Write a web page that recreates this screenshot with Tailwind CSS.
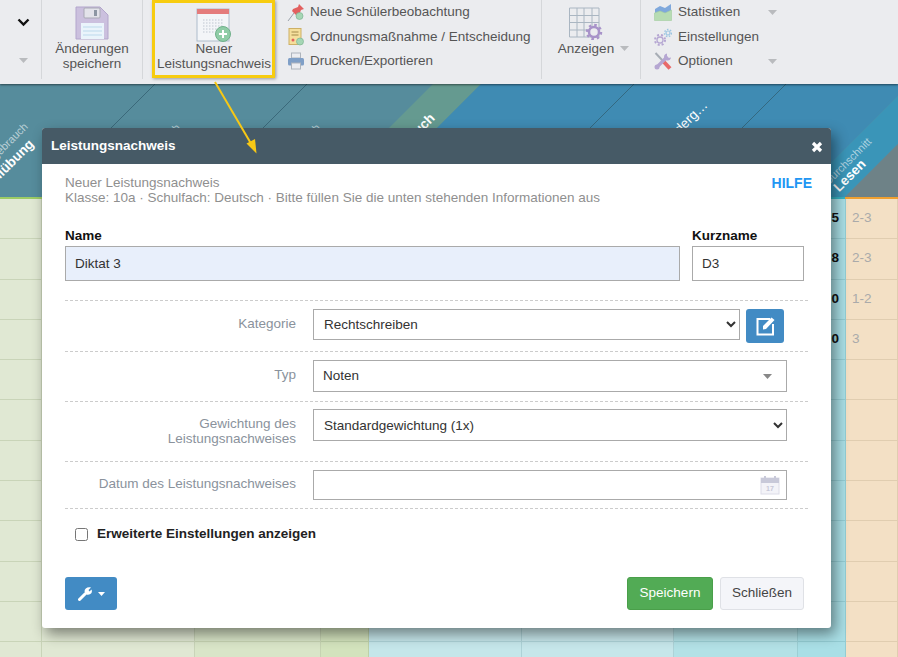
<!DOCTYPE html>
<html lang="de">
<head>
  <meta charset="utf-8" />
  <title>Leistungsnachweis</title>
  <script src="https://cdn.jsdelivr.net/npm/@tailwindcss/browser@4"></script>
</head>
<body class="relative w-[898px] h-[657px] overflow-hidden bg-white font-['Liberation_Sans',Arial,sans-serif] text-[13.5px]">

  <!-- toolbar -->
  <div class="relative z-20 flex h-[84px] bg-[#ebecef] text-[#555] shadow-[0_1px_2px_rgba(0,0,0,0.5)]">
    <div class="flex flex-col items-center w-[42px] h-[79px] pl-[6px] border-r border-[#d5d7da]">
      <svg class="mt-[18px]" width="13" height="9" viewBox="0 0 13 9"><path d="M1.5 1.5 6.5 6.5 11.5 1.5" fill="none" stroke="#111" stroke-width="2.4"/></svg>
      <svg class="mt-[31px]" width="9" height="5" viewBox="0 0 9 5"><path d="M0 0h9L4.500 5z" fill="#b9bbbe"/></svg>
    </div>
    <div class="flex flex-col items-center w-[101px] h-[79px] pt-[6px] border-r border-[#d5d7da] leading-[15px] text-center">
      <svg class="shrink-0" width="34" height="34" viewBox="0 0 34 34">
        <path d="M1 1h24l8 8v24H1z" fill="#cbc0de" stroke="#b3a6cc"/>
        <rect x="9" y="2" width="16" height="10" rx="1" fill="#e3e3ea" stroke="#a9a9b5"/>
        <rect x="19" y="4" width="3" height="6" fill="#8d96a3"/>
        <rect x="6" y="17" width="23" height="16" fill="#eaf4fb"/>
        <path d="M8 21h19M8 25h19M8 29h19" stroke="#bcd9ec"/>
      </svg>
      <span class="mt-[1px]">Änderungen<br>speichern</span>
    </div>
    <div class="flex flex-col items-center ml-[9px] w-[123px] h-[78px] pt-[5px] pl-[1px] border-[3px] border-[#f7cc0f] leading-[15px] text-center shadow-[1px_1px_3px_rgba(0,0,0,0.35)]">
      <svg class="shrink-0" width="36" height="34" viewBox="0 0 36 34">
        <rect x="1" y="1" width="32" height="32" fill="#f3f5f8" stroke="#aebccb"/>
        <rect x="1" y="1" width="32" height="5" fill="#e47c7c"/>
        <path d="M7 12h20M7 15h20M7 18h20M7 21h14M7 24h11" stroke="#bfc6d0" stroke-dasharray="1.500 1.500"/>
        <circle cx="27" cy="26" r="7.500" fill="#8fcca6" stroke="#6fb08a"/>
        <path d="M27 22v8M23 26h8" stroke="#fff" stroke-width="2"/>
      </svg>
      <span class="-mt-[1px] whitespace-nowrap">Neuer<br>Leistungsnachweis</span>
    </div>
    <div class="flex flex-col w-[267px] h-[79px] pl-[12px] pt-[3px] border-r border-[#d5d7da]">
      <div class="flex items-center h-[18px] gap-[5px]">
        <svg class="shrink-0" width="18" height="18" viewBox="0 0 18 18"><path d="M1 18 7 10" stroke="#9aa2ab"/><path d="M6 6 11 4 12 1 17 6 14 7 12 12 10 13 5 8z" fill="#e2605f"/><circle cx="12.500" cy="13" r="3.500" fill="#a5d6b5" stroke="#7db592" stroke-width=".7"/></svg>
        <span class="whitespace-nowrap">Neue Schülerbeobachtung</span>
      </div>
      <div class="flex items-center h-[18px] mt-[7px] gap-[5px]">
        <svg class="shrink-0" width="18" height="18" viewBox="0 0 18 18"><rect x="2" y="0.500" width="12" height="16" fill="#f5df9c" stroke="#cdb066"/><path d="M4.500 4h7M4.500 7h7" stroke="#a38a4a"/><circle cx="6" cy="12" r="1.500" fill="#e2605f"/><circle cx="13" cy="13.500" r="3.500" fill="#a5d6b5" stroke="#7db592" stroke-width=".7"/></svg>
        <span class="whitespace-nowrap">Ordnungsmaßnahme / Entscheidung</span>
      </div>
      <div class="flex items-center h-[18px] mt-[6px] gap-[5px]">
        <svg class="shrink-0" width="18" height="18" viewBox="0 0 18 18"><rect x="4.500" y="1" width="9" height="5" fill="#ecedf1" stroke="#aeb4bd"/><rect x="1" y="6" width="16" height="7.500" rx="1.500" fill="#7f9fc7"/><rect x="4.500" y="11" width="9" height="6" fill="#ecedf1" stroke="#aeb4bd"/></svg>
        <span class="whitespace-nowrap">Drucken/Exportieren</span>
      </div>
    </div>
    <div class="flex flex-col items-center w-[99px] h-[79px] pt-[7px] border-r border-[#d5d7da]">
      <svg class="shrink-0 -ml-[10px]" width="36" height="33" viewBox="0 0 36 33">
        <path d="M1.500 1h29.500v29H1.500zM9 1v29M16 1v29M24 1v29M1.500 8.500h29.500M1.500 15.500h29.500M1.500 23h29.500" fill="none" stroke="#aab6c2"/>
        <g transform="translate(26 25)"><circle r="5" fill="#ebecef" stroke="#a893c9" stroke-width="2.500"/><circle r="7" fill="none" stroke="#a893c9" stroke-width="2.500" stroke-dasharray="2.500 3"/></g>
      </svg>
      <span class="flex items-center gap-[6px] ml-[5px] mt-[1px] leading-[15px]">Anzeigen<svg width="9" height="5" viewBox="0 0 9 5"><path d="M0 0h9L4.500 5z" fill="#b9bbbe"/></svg></span>
    </div>
    <div class="flex flex-col pl-[13px] pt-[3px]">
      <div class="flex items-center h-[18px] gap-[6px]">
        <svg class="shrink-0" width="18" height="18" viewBox="0 0 18 18"><path d="M1 6 6 3 11 5 17 1V11H1z" fill="#7fa8dc"/><path d="M.500 10 6 8 11 10 17.500 7V17.500H.500z" fill="#b7dcb3" stroke="#a3cda0" stroke-width=".6"/></svg>
        <span class="w-[84px]">Statistiken</span>
        <svg width="9" height="5" viewBox="0 0 9 5"><path d="M0 0h9L4.500 5z" fill="#b9bbbe"/></svg>
      </div>
      <div class="flex items-center h-[18px] mt-[7px] gap-[6px]">
        <svg class="shrink-0" width="18" height="18" viewBox="0 0 18 18"><g transform="translate(6 12)"><circle r="3" fill="none" stroke="#b5a6d2" stroke-width="1.300"/><circle r="5" fill="none" stroke="#b5a6d2" stroke-width="2" stroke-dasharray="2 2"/></g><g transform="translate(14 5)"><circle r="2" fill="none" stroke="#9cc6e2" stroke-width="1.200"/><circle r="3.500" fill="none" stroke="#9cc6e2" stroke-width="1.500" stroke-dasharray="1.500 1.500"/></g></svg>
        <span>Einstellungen</span>
      </div>
      <div class="flex items-center h-[18px] mt-[6px] gap-[6px]">
        <svg class="shrink-0" width="18" height="18" viewBox="0 0 18 18"><path d="M1.500 1 9 9" stroke="#a7adb5" stroke-width="2"/><path d="M9 9 16 16.500" stroke="#e86a6a" stroke-width="4"/><path d="M13.500 4.500 3 15" stroke="#b5a6d2" stroke-width="3.200"/><circle cx="3" cy="15" r="2.500" fill="#b5a6d2"/><path d="M13 1.500A3.500 3.500 0 1 0 17 5.500L14.500 6 13 4.500z" fill="#b5a6d2"/></svg>
        <span class="w-[84px]">Optionen</span>
        <svg width="9" height="5" viewBox="0 0 9 5"><path d="M0 0h9L4.500 5z" fill="#b9bbbe"/></svg>
      </div>
    </div>
  </div>

  <!-- rotated column heads -->
  <div class="relative h-[113px] overflow-hidden">
    <svg class="absolute inset-0" width="898" height="113" viewBox="0 84 898 113">
      <rect x="0" y="84" width="898" height="113" fill="#568c9c"/>
      <path d="M320 197 433 84H481L368 197z" fill="#659a90"/>
      <path d="M368 197 481 84H898V96L797 197z" fill="#3f8bb3"/>
      <path d="M797 197 898 96V144L845 197z" fill="#3a95b8"/>
      <path d="M845 197 898 144V197z" fill="#6e8287"/>
      <path d="M42 197 155 84M194 197 307 84M521 197 634 84M673 197 786 84" stroke="#2f5a6b" stroke-width=".7"/>
    </svg>
    <span class="absolute right-[866px] bottom-[67px] -rotate-45 origin-bottom-right whitespace-nowrap text-[11px] text-white/60">Sprachgebrauch</span>
    <span class="absolute right-[859px] bottom-[48px] -rotate-45 origin-bottom-right whitespace-nowrap font-bold text-white">Stillübung</span>
    <span class="absolute right-[714px] bottom-[66px] -rotate-45 origin-bottom-right whitespace-nowrap text-[11px] text-white/60">Gebrauch</span>
    <span class="absolute right-[574px] bottom-[66px] -rotate-45 origin-bottom-right whitespace-nowrap text-[11px] text-white/60">Gebrauch</span>
    <span class="absolute right-[458px] bottom-[74px] -rotate-45 origin-bottom-right whitespace-nowrap font-bold text-white">Gebrauch</span>
    <span class="absolute right-[185px] bottom-[87px] -rotate-45 origin-bottom-right whitespace-nowrap text-white">Förderg…</span>
    <span class="absolute right-[23px] bottom-[52px] -rotate-45 origin-bottom-right whitespace-nowrap text-[11px] text-white/60">Durchschnitt</span>
    <span class="absolute right-[27px] bottom-[28px] -rotate-45 origin-bottom-right whitespace-nowrap font-bold text-white">Lesen</span>
  </div>

  <!-- grade table behind the dialog -->
  <div class="flex h-[2px]">
    <div class="w-[368px] bg-[#9ccc65]"></div>
    <div class="w-[477px] bg-[#35b4c4]"></div>
    <div class="flex-1 bg-[#f0a030]"></div>
  </div>
  <div id="grid" class="grid grid-cols-[42px_153px_126px_48px_153px_152px_124px_48px_52px] auto-rows-[40.3px]"></div>

  <!-- arrow -->
  <svg class="absolute left-0 top-0 z-40" width="300" height="170" viewBox="0 0 300 170">
    <path d="M215 82 253 147" stroke="#f7c815" stroke-width="2" fill="none"/>
    <path d="M256.500 153.500 246.500 143.500 255 139z" fill="#f7c815"/>
  </svg>

  <!-- dialog -->
  <div class="absolute left-[42px] top-[128px] z-30 flex flex-col w-[789px] h-[500px] rounded-[3px] bg-white shadow-[4px_6px_14px_rgba(0,0,0,0.45)]">
    <div class="flex items-center justify-between h-[36px] pl-[9px] pr-[8px] rounded-t-[3px] bg-[#465a66] text-white">
      <span class="font-bold">Leistungsnachweis</span>
      <svg width="12" height="12" viewBox="0 0 12 12" class="mt-[1px]"><path d="M2 2 10 10M10 2 2 10" stroke="#fff" stroke-width="3.200"/></svg>
    </div>
    <div class="flex flex-col flex-1 px-[23px] pb-[18px]">
      <div class="flex justify-between pt-[11px] leading-[15px] text-[#8f8f8f]">
        <div>Neuer Leistungsnachweis<br>Klasse: 10a · Schulfach: Deutsch · Bitte füllen Sie die unten stehenden Informationen aus</div>
        <a class="font-bold text-[14px] text-[#2196f3] -mr-[4px] mt-[1px] h-fit">HILFE</a>
      </div>
      <div class="flex gap-[12px] mt-[22px] h-[54px] mb-[19px]">
        <label class="flex flex-col w-[615px]">
          <span class="font-bold text-[#111] leading-[16px] pt-[1px] mb-[2px]">Name</span>
          <input value="Diktat 3" class="h-[35px] px-[9px] pb-[1px] border border-[#aaa] bg-[#e8effb] text-[#333]" />
        </label>
        <label class="flex flex-col w-[112px]">
          <span class="font-bold text-[#111] leading-[16px] pt-[1px] mb-[2px]">Kurzname</span>
          <input value="D3" class="h-[35px] px-[9px] pb-[1px] border border-[#aaa] text-[#333]" />
        </label>
      </div>
      <div class="flex h-[51px] pt-[8px] border-t border-dashed border-[#ccc]">
        <span class="w-[231px] mt-[5px] text-right text-[#8a929c]">Kategorie</span>
        <select class="ml-[17px] w-[427px] h-[31px] px-[6px] border border-[#aaa] bg-white text-[#333]"><option>Rechtschreiben</option></select>
        <button class="flex items-center justify-center ml-[6px] w-[38px] h-[34px] rounded-[3px] bg-[#428bc4]">
          <svg width="21" height="21" viewBox="0 0 21 21"><path d="M15 3H2.500V18.500H18V8" fill="none" stroke="#fff" stroke-width="2"/><path d="M8 10 16.500 1.500 19.500 4 11 13 8 13.500z" fill="#fff"/></svg>
        </button>
      </div>
      <div class="flex h-[50px] pt-[8px] border-t border-dashed border-[#ccc]">
        <span class="w-[231px] mt-[5px] text-right text-[#8a929c]">Typ</span>
        <div class="flex items-center justify-between ml-[17px] w-[474px] h-[32px] pl-[9px] pr-[14px] border border-[#aaa] text-[#333]">
          <span>Noten</span>
          <svg width="9" height="5" viewBox="0 0 9 5"><path d="M0 0h9L4.500 5z" fill="#888"/></svg>
        </div>
      </div>
      <div class="flex h-[60px] pt-[7px] border-t border-dashed border-[#ccc]">
        <span class="w-[231px] mt-[7px] text-right leading-[15px] text-[#8a929c]">Gewichtung des<br>Leistungsnachweises</span>
        <select class="ml-[17px] w-[474px] h-[32px] px-[6px] border border-[#aaa] bg-white text-[#333]"><option>Standardgewichtung (1x)</option></select>
      </div>
      <div class="flex h-[48px] pt-[8px] border-t border-b border-dashed border-[#ccc]">
        <span class="w-[231px] mt-[4px] text-right text-[#8a929c]">Datum des Leistungsnachweises</span>
        <div class="flex items-center justify-end ml-[17px] w-[474px] h-[30px] pr-[6px] border border-[#aaa]">
          <svg width="20" height="20" viewBox="0 0 20 20"><rect x="1" y="3" width="18" height="16" fill="#f3f3f8" stroke="#dcdce8"/><rect x="1" y="3" width="18" height="5" fill="#c8c9d9"/><path d="M5 1v4M15 1v4" stroke="#c8c9d9" stroke-width="2"/><text x="10" y="16" text-anchor="middle" font-size="7" font-weight="700" fill="#c8c9d9">17</text></svg>
        </div>
      </div>
      <label class="flex items-center mt-[17px] ml-[10px] h-[16px]">
        <input type="checkbox" class="w-[13px] h-[13px]" />
        <span class="ml-[9px] font-bold text-[#222]">Erweiterte Einstellungen anzeigen</span>
      </label>
      <div class="flex items-center mt-auto mr-[4px] h-[33px]">
        <button class="flex items-center justify-center gap-[5px] w-[52px] h-[33px] rounded-[3px] bg-[#428bc4]">
          <svg width="15" height="15" viewBox="0 0 15 15"><path d="M1.500 13.500 7.500 7.500" stroke="#fff" stroke-width="3" stroke-linecap="round"/><path d="M6.500 5.500C6.500 2.500 9.500 .500 13 1.500L10.500 4 11.500 5.500 13.500 3.500C15 7 12 9.500 8.500 8.500z" fill="#fff"/></svg>
          <svg width="7" height="4" viewBox="0 0 7 4"><path d="M0 0h7L3.500 4z" fill="#fff"/></svg>
        </button>
        <button class="ml-auto w-[86px] h-[33px] rounded-[3px] border border-[#4a9f4a] bg-[#52ab55] text-white">Speichern</button>
        <button class="ml-[7px] w-[84px] h-[33px] rounded-[3px] border border-[#dfe1e6] bg-[#f4f5f9] text-[#444]">Schließen</button>
      </div>
    </div>
  </div>

<script>
// columns of the grade table, left to right
const COLS=[
  'bg-[#e0e8d3] border-[#c9d4b8]','bg-[#e0e8d3] border-[#c9d4b8]','bg-[#d9e5c8] border-[#c6d3b2]',
  'bg-[#d3e3bd] border-[#bed0a8]','bg-[#c5e6ea] border-[#add2d7]','bg-[#c6e6ea] border-[#add2d7]',
  'bg-[#b3e1e6] border-[#9ccfd4]','bg-[#a9dfe6] border-[#93ccd3]','bg-[#f3e0c5] border-[#e0cdb0]'
];
const AVG=['5','8','0','0'], NOTE=['2-3','2-3','1-2','3'];
const grid=document.getElementById('grid');
for(let r=0;r<12;r++){
  COLS.forEach((c,i)=>{
    const d=document.createElement('div');
    d.className=c+' border-b border-r px-[6px] pt-[11px] leading-[16px]';
    if(i==7) d.innerHTML=`<div class="font-bold text-right text-[#111]">${AVG[r]||''}</div>`;
    if(i==8) d.innerHTML=`<div class="text-[#aaa]">${NOTE[r]||''}</div>`;
    grid.appendChild(d);
  });
}
</script>
</body>
</html>
